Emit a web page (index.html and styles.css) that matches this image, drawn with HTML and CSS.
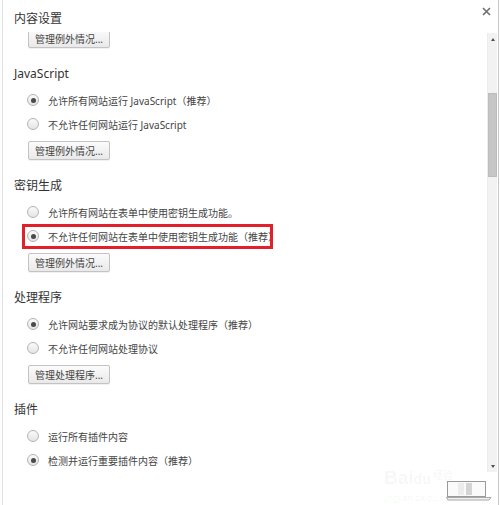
FILE: index.html
```html
<!DOCTYPE html>
<html lang="zh-CN">
<head>
    <meta charset="UTF-8">
    <title>内容设置</title>
    <link rel="stylesheet" href="styles.css">
</head>
<body>

<div class="dialog">
    <div class="dialog-header">
        <h1>内容设置</h1>
        <svg class="close-btn" width="9" height="9" viewBox="0 0 9 9">
            <path d="M1 1 L8 8 M8 1 L1 8" stroke="#6f6f6f" stroke-width="1.6"/>
        </svg>
    </div>

    <div class="dialog-body">
        <div class="content">
            <div class="content-inner">
                <button class="setting-btn first-btn">管理例外情况...</button>

                <!-- JavaScript -->
                <div class="section">
                    <h2>JavaScript</h2>
                    <div class="options">
                        <div class="option"><span class="radio checked"></span>允许所有网站运行 JavaScript（推荐）</div>
                        <div class="option"><span class="radio"></span>不允许任何网站运行 JavaScript</div>
                    </div>
                    <button class="setting-btn">管理例外情况...</button>
                </div>

                <!-- 密钥生成 -->
                <div class="section">
                    <h2>密钥生成</h2>
                    <div class="options">
                        <div class="option"><span class="radio"></span>允许所有网站在表单中使用密钥生成功能。</div>
                        <div class="option marked"><span class="radio checked"></span>不允许任何网站在表单中使用密钥生成功能（推荐）</div>
                    </div>
                    <button class="setting-btn">管理例外情况...</button>
                </div>

                <!-- 处理程序 -->
                <div class="section">
                    <h2>处理程序</h2>
                    <div class="options">
                        <div class="option"><span class="radio checked"></span>允许网站要求成为协议的默认处理程序（推荐）</div>
                        <div class="option"><span class="radio"></span>不允许任何网站处理协议</div>
                    </div>
                    <button class="setting-btn">管理处理程序...</button>
                </div>

                <!-- 插件 -->
                <div class="section">
                    <h2>插件</h2>
                    <div class="options">
                        <div class="option"><span class="radio"></span>运行所有插件内容</div>
                        <div class="option"><span class="radio checked"></span>检测并运行重要插件内容（推荐）</div>
                    </div>
                </div>
            </div>
        </div>

        <div class="scrollbar">
            <div class="arrow up"></div>
            <div class="track">
                <div class="thumb"></div>
            </div>
            <div class="arrow down"></div>
        </div>
    </div>

    <div class="watermark">
        <div class="wm-logo">Bai<span>du</span><small>经验</small></div>
        <div class="wm-url">jingyan.baidu.com</div>
        <svg class="wm-laptop" width="46" height="21" viewBox="0 0 46 21">
            <rect x="1.5" y="1.5" width="38" height="15" fill="#fafafa" stroke="#9a9a9a"/>
            <rect x="20" y="3" width="6" height="12" fill="#d4d4d4"/>
            <rect x="12" y="3" width="6" height="12" fill="#ececec"/>
            <path d="M0.5 17.5 H45 L43 20 H2 Z" fill="#f0f0f0" stroke="#a8a8a8"/>
        </svg>
    </div>
</div>

</body>
</html>
```

FILE: styles.css
```css
body {
    margin: 0;
    padding: 0;
    background-color: #fff;
    font-family: "Noto Sans", "Noto Sans CJK SC", sans-serif;
}

.dialog {
    position: relative;
    height: 505px;
    margin: 0 1px 0 2px;
    border-left: 1px solid #e2e2e2;
    border-right: 1px solid #c8c8c8;
    display: flex;
    flex-direction: column;
    box-sizing: border-box;
    overflow: hidden;
}

.dialog-header {
    height: 32px;
    display: flex;
    justify-content: space-between;
    align-items: flex-start;
    padding-left: 11px;
    flex-shrink: 0;
}

.dialog-header h1 {
    margin: 9px 0 0;
    font-size: 12px;
    line-height: 20px;
    font-weight: normal;
    color: #333;
}

.close-btn {
    margin: 7px 7px 0 0;
}

.dialog-body {
    display: flex;
    flex: 1;
    min-height: 0;
}

.content {
    flex: 1;
    overflow: hidden;
}

.content-inner {
    margin-top: -3px;
    padding-left: 11px;
}

h2 {
    margin: 0;
    padding-top: 2px;
    font-size: 12px;
    line-height: 20px;
    font-weight: normal;
    color: #333;
}

.section {
    margin-top: 14px;
}

.first-btn {
    margin-bottom: 1px;
}

.options {
    margin: 4px 0 5px 13px;
}

.option {
    height: 24px;
    display: flex;
    align-items: center;
    font-size: 10px;
    color: #444;
    white-space: nowrap;
}

.option.marked {
    position: relative;
}

.option.marked::after {
    content: "";
    position: absolute;
    left: -5px;
    top: 0;
    width: 251px;
    height: 25px;
    border: 3px solid #e2202c;
    box-sizing: border-box;
}

.radio {
    width: 12px;
    height: 12px;
    border-radius: 50%;
    border: 1px solid #b4b4b4;
    background: linear-gradient(#fafafa, #e4e4e4);
    box-sizing: border-box;
    margin-right: 9px;
    display: flex;
    align-items: center;
    justify-content: center;
    flex-shrink: 0;
}

.radio.checked::before {
    content: "";
    width: 5px;
    height: 5px;
    border-radius: 50%;
    background-color: #4a4a4a;
}

.setting-btn {
    display: block;
    margin-left: 14px;
    height: 19px;
    width: 82px;
    padding: 0;
    border: 1px solid #c3c3c3;
    border-radius: 2px;
    background: linear-gradient(#fbfbfb, #e9e9e9);
    font-family: "Noto Sans", "Noto Sans CJK SC", sans-serif;
    font-size: 10px;
    color: #444;
    box-shadow: 0 1px 0 rgba(0, 0, 0, 0.06);
}

.scrollbar {
    width: 10px;
    margin: 1px 1px 0 0;
    height: 439px;
    background-color: #f2f2f2;
    border-left: 1px solid #ececec;
    box-sizing: border-box;
    display: flex;
    flex-direction: column;
}

.arrow {
    height: 12px;
    display: flex;
    align-items: center;
    justify-content: center;
    flex-shrink: 0;
}

.arrow::before {
    content: "";
    border-left: 2.5px solid transparent;
    border-right: 2.5px solid transparent;
}

.arrow.up::before {
    border-bottom: 3px solid #505050;
}

.arrow.down::before {
    border-top: 3px solid #505050;
}

.track {
    flex: 1;
    padding-top: 48px;
}

.thumb {
    height: 84px;
    background-color: #c6c6c6;
    border: 1px solid #bcbcbc;
    box-sizing: border-box;
}

.watermark {
    position: absolute;
    right: 6px;
    bottom: 2px;
    width: 108px;
    height: 36px;
}

.wm-logo {
    position: absolute;
    left: 0;
    top: 0;
    font-family: "Liberation Sans", sans-serif;
    font-size: 19px;
    font-weight: bold;
    color: rgba(0, 0, 0, 0.045);
    white-space: nowrap;
}

.wm-logo span {
    font-size: 14px;
}

.wm-logo small {
    font-family: "Noto Sans CJK SC", sans-serif;
    font-size: 10px;
    margin-left: 2px;
    vertical-align: top;
}

.wm-url {
    position: absolute;
    left: 0;
    bottom: 0;
    font-family: "Liberation Sans", sans-serif;
    font-size: 9px;
    color: rgba(0, 0, 0, 0.05);
}

.wm-laptop {
    position: absolute;
    right: 0;
    bottom: 2px;
}
```
